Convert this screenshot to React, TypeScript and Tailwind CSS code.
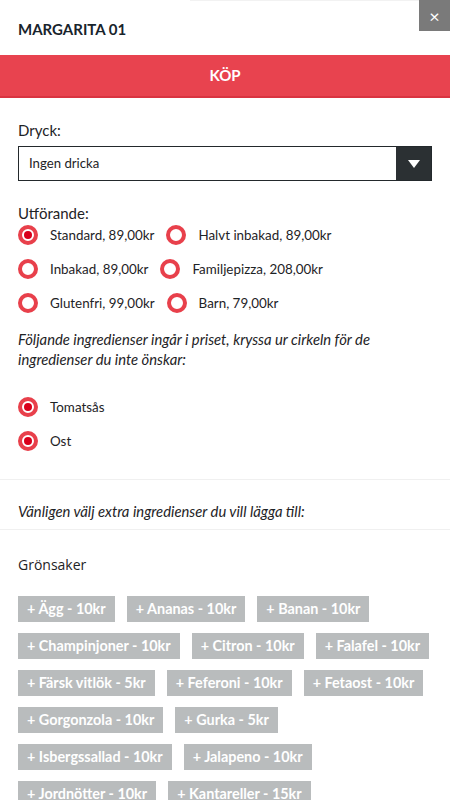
import React, { useState } from 'react';

const sizes = [
    'Standard, 89,00kr',
    'Halvt inbakad, 89,00kr',
    'Inbakad, 89,00kr',
    'Familjepizza, 208,00kr',
    'Glutenfri, 99,00kr',
    'Barn, 79,00kr',
];

const extras = [
    'Ägg - 10kr',
    'Ananas - 10kr',
    'Banan - 10kr',
    'Champinjoner - 10kr',
    'Citron - 10kr',
    'Falafel - 10kr',
    'Färsk vitlök - 5kr',
    'Feferoni - 10kr',
    'Fetaost - 10kr',
    'Gorgonzola - 10kr',
    'Gurka - 5kr',
    'Isbergssallad - 10kr',
    'Jalapeno - 10kr',
    'Jordnötter - 10kr',
    'Kantareller - 15kr',
];

const Radio = ({ checked }: { checked: boolean }) => (
    <span className="w-5 h-5 rounded-full border-[4px] border-[#e8404b] bg-white flex items-center justify-center shrink-0">
        {checked && <span className="w-2 h-2 rounded-full bg-[#d9001b]" />}
    </span>
);

const App = () => {
    const [size, setSize] = useState(0);
    const [kept, setKept] = useState({ Tomatsås: true, Ost: true } as Record<string, boolean>);

    return (
        <div className="w-[450px] h-[800px] overflow-hidden bg-white text-[#1e2326] font-['Lato','Liberation_Sans',sans-serif]">
            {/* Header */}
            <div className="relative h-[55px] flex items-center px-[18px]">
                <div className="absolute top-0 left-[190px] right-[31px] h-px bg-[#f2f2f2]" />
                <h1 className="font-bold text-[15px] text-[#18242c] pt-1">MARGARITA 01</h1>
                <button className="absolute top-0 right-0 w-[31px] h-[31px] bg-[#7a7a7a] text-white text-[18px] leading-none flex items-center justify-center">
                    ×
                </button>
            </div>

            <button className="w-full h-[43px] bg-[#e8434f] border-b-2 border-[#d93441] text-white font-bold text-[15px]">
                KÖP
            </button>

            <div className="px-[18px] pt-[22px]">
                <p className="text-[15px] leading-5">Dryck:</p>
                <div className="mt-[6px] h-[35px] border border-[#23292c] flex items-stretch">
                    <span className="flex-1 flex items-center px-[10px] text-[13.2px]">Ingen dricka</span>
                    <span className="w-[35px] bg-[#2b3033] flex items-center justify-center">
                        <svg width="12" height="8" viewBox="0 0 12 8"><path d="M0 0h12L6 8z" fill="#fff" /></svg>
                    </span>
                </div>

                <p className="mt-[22px] text-[15px] leading-5">Utförande:</p>
                <div className="flex flex-wrap">
                    {sizes.map((s, i) => (
                        <label key={s} className="flex items-center gap-3 mr-3 mb-[10px] h-6 text-[13.4px] cursor-pointer" onClick={() => setSize(i)}>
                            <Radio checked={size === i} />
                            <span>{s}</span>
                        </label>
                    ))}
                </div>

                <p className="mt-[4px] italic text-[14.8px] leading-5">
                    Följande ingredienser ingår i priset, kryssa ur cirkeln för de ingredienser du inte önskar:
                </p>
                <div className="mt-[26px] flex flex-col">
                    {['Tomatsås', 'Ost'].map(n => (
                        <label key={n} className="flex items-center gap-3 mb-[10px] h-6 text-[13.4px] cursor-pointer" onClick={() => setKept(p => ({ ...p, [n]: !p[n] }))}>
                            <Radio checked={kept[n]} />
                            <span>{n}</span>
                        </label>
                    ))}
                </div>
            </div>

            <div className="mt-[16px] border-t border-[#f0f0f0]" />
            <p className="px-[18px] pt-[21px] pb-[8px] leading-5 italic text-[14.8px]">Vänligen välj extra ingredienser du vill lägga till:</p>
            <div className="border-t border-[#f0f0f0]" />

            <div className="px-[18px] pt-[25px]">
                <p className="text-[14px] leading-5 font-['Open_Sans','Liberation_Sans',sans-serif]">Grönsaker</p>
                <div className="mt-[21px] flex flex-wrap gap-x-3 gap-y-[11px]">
                    {extras.map(e => (
                        <button key={e} className="h-[26px] px-[9px] bg-[#b9bcbd] text-white font-bold text-[14.4px] leading-none">
                            + {e}
                        </button>
                    ))}
                </div>
            </div>
        </div>
    );
};

export default App;
